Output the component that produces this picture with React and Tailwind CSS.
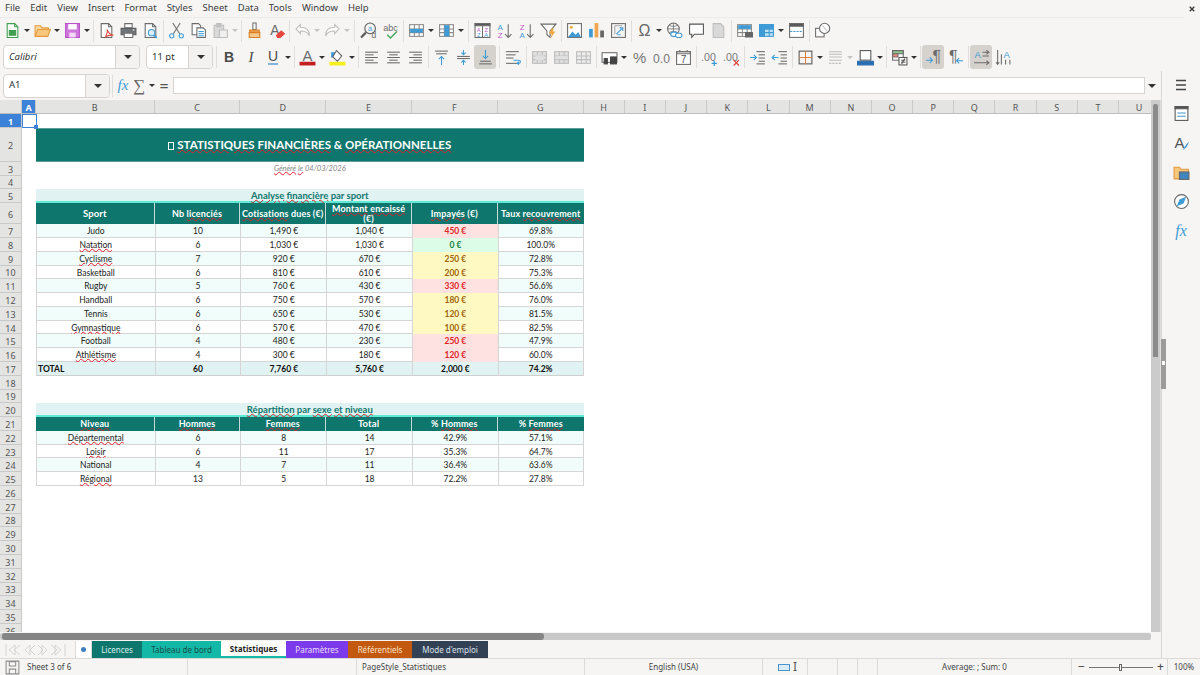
import React from "react";

const BLUE = "#3f9bd6";
const GREY = "#6b6b6b";
const LIGHT = "#bdbdbd";

const S = ({ children, stroke = GREY }) => (
    <svg viewBox="0 0 16 16" className="w-[17px] h-[17px]" fill="none" stroke={stroke} strokeWidth="1">
        {children}
    </svg>
);

const Lines = ({ rows, color = GREY }) => (
    <>
        {rows.map(([x1, x2, y], i) => (
            <path key={i} d={`M${x1} ${y}H${x2}`} stroke={color} />
        ))}
    </>
);

const Grid = ({ fill = "#fff", stroke = "#8a8a8a" }) => (
    <>
        <rect x="1.5" y="2.5" width="13" height="11" fill={fill} stroke={stroke} />
        <path d="M1.5 6.5h13M1.5 10h13M6 2.5v11M10.5 2.5v11" stroke={stroke} />
    </>
);

const T = ({ x = 8, y = 12, size = 11, fill = GREY, weight = 400, style, children }) => (
    <text x={x} y={y} fontSize={size} fill={fill} stroke="none" fontWeight={weight} fontStyle={style} textAnchor="middle" fontFamily="Liberation Sans, sans-serif">
        {children}
    </text>
);

const icons = {
    newdoc: <S stroke="#3f9e4f"><path d="M3 1.5h7l3 3v10H3z" fill="#fff" /><path d="M5 8h6v4.5H5z" fill="#3f9e4f" /><path d="M10 1.5v3h3" /></S>,
    open: <S stroke="#e49a3c"><path d="M1 13.5v-10h5l1.5 2h6v2" fill="#fbd9a3" /><path d="M1 13.5l2.5-6.5h12l-2.5 6.5z" fill="#f8c77e" /></S>,
    save: <S stroke="#b94fc9"><path d="M1.5 1.5h13v13h-13z" fill="#cf77dc" /><path d="M4 2h8v5H4z" fill="#fff" stroke="none" /><path d="M5 10h6v4.5H5z" fill="#f3d9f7" stroke="none" /></S>,
    pdf: <S><path d="M3 1.5h7l3 3v10H3z" fill="#fff" /><path d="M10 1.5v3h3" /><path d="M7 14c2-4 2-6 1.5-7 1 3 3 5 6 5.5-3-.5-6 .5-7.5 1.5z" stroke="#e0483a" /></S>,
    print: <S><path d="M4.5 1.5h7v4h-7z" fill="#fff" /><path d="M1 6h14v6H1z" fill="#6f7478" stroke="#5c6064" /><path d="M4 10.5h8v4H4z" fill="#fff" /><path d="M12 7.5h1.5" stroke="#fff" /></S>,
    preview: <S><path d="M3 1.5h7l3 3v10H3z" fill="#fff" /><path d="M10 1.5v3h3" /><circle cx="9" cy="10" r="3" stroke={BLUE} fill="#dcefff" /><path d="M11 12.5l3 2.5" stroke={BLUE} strokeWidth="1.5" /></S>,
    cut: <S><path d="M4.5 1l6.5 10M11.5 1L5 11" /><circle cx="3.5" cy="13" r="2" stroke={BLUE} /><circle cx="12.5" cy="13" r="2" stroke={BLUE} /></S>,
    copy: <S><path d="M2 1.5h6l2 2v8.5H2z" fill="#fff" /><path d="M6.5 5.5h6l2 2v7H6.5z" fill="#fff" /><Lines color={BLUE} rows={[[8, 13, 9], [8, 13, 11], [8, 13, 13]]} /></S>,
    paste: <S stroke={LIGHT}><path d="M2 3h9v11.5H2z" fill="#d9d9d9" /><path d="M4.5 1.5h4v3h-4z" fill="#c4c4c4" /><path d="M7 7.5h7.5v7H7z" fill="#efefef" /></S>,
    clone: <S stroke="#d97f22"><path d="M6.5 1h3v6h-3z" fill="#fff" stroke={GREY} /><path d="M3.5 7.5h9v2h-9z" fill="#f4b266" /><path d="M3 10h10v4.5H3z" fill="#f7c98d" /></S>,
    clear: <S><T x={6.5} y={12} size={13}>A</T><path d="M8 12.5l4.5-4 3 2.5-4 3.5H9z" fill="#e8473f" stroke="#e8473f" /></S>,
    undo: <S stroke={LIGHT}><path d="M2 6.5l4-4V5c5 0 8.5 2 8.5 8C13 9.500 10.500 8.500 6 8.500V11z" fill="#fff" /></S>,
    redo: <S stroke={LIGHT}><path d="M14 6.5l-4-4V5c-5 0-8.500 2-8.500 8C3 9.500 5.500 8.500 10 8.500V11z" fill="#fff" /></S>,
    find: <S><circle cx="9.5" cy="6" r="5" stroke="#5a5a5a" /><path d="M5.5 10L1 14.5" strokeWidth="2" stroke="#5a5a5a" /><T x={9.5} y={8.5} size={7} fill={BLUE}>a</T><T x={13} y={15.5} size={8}>d</T></S>,
    spell: <S><T x={8} y={8} size={8.5}>abc</T><path d="M5 12l3 3 6-6" stroke="#45a85a" strokeWidth="1.4" /></S>,
    row: <S><Grid /><rect x="2" y="6.5" width="12" height="3.5" fill={BLUE} stroke="none" /></S>,
    col: <S><Grid /><rect x="6" y="3" width="4.5" height="10.5" fill={BLUE} stroke="none" /></S>,
    sort: <S><path d="M1 1.5h14v13H1z" fill="#fff" /><path d="M1 1.5h14v2H1z" fill="#555" /><path d="M8 3.5v11" /><T x={4.5} y={9} size={5.5} fill="#b85ac7">A</T><T x={4.5} y={14} size={5.5} fill={BLUE}>Z</T><T x={11.5} y={9} size={5.5} fill="#b85ac7">Z</T><T x={11.5} y={14} size={5.5} fill={BLUE}>A</T></S>,
    asc: <S><T x={4} y={7.5} size={7.5} fill={BLUE}>A</T><T x={4} y={15} size={7.5} fill="#b85ac7">Z</T><path d="M11.5 2v12.5M8.5 11.5l3 3 3-3" /></S>,
    desc: <S><T x={4} y={7.5} size={7.5} fill="#b85ac7">Z</T><T x={4} y={15} size={7.5} fill={BLUE}>A</T><path d="M11.5 2v12.5M8.5 11.5l3 3 3-3" /></S>,
    filter: <S><path d="M1 2h14L9.5 8.5v6l-3-2.5V8.5z" fill="#fff" /><path d="M11 6l-2.5 5H11l-1 4 4.5-6H12l1-3z" fill="#f3a73b" stroke="none" /></S>,
    image: <S><rect x="1.5" y="1.5" width="13" height="13" fill="#fff" /><circle cx="5" cy="5" r="1.5" fill="#f3b14b" stroke="none" /><path d="M2 14l4-5 3 3 2.5-2.5L14 14z" fill={BLUE} stroke="none" /></S>,
    chart: <S stroke="none"><rect x="1" y="6.5" width="3.5" height="8" fill={BLUE} /><rect x="6.2" y="1" width="3.5" height="13.5" fill="#f0a850" /><rect x="11.5" y="8" width="3.5" height="6.5" fill="#666" /></S>,
    pivot: <S><rect x="1.5" y="1.5" width="13" height="13" fill="#f5f5f5" /><path d="M4.5 3.5h7M4.5 3.5v8" stroke="#aaa" /><path d="M6 11.5l5-5M9 5.500h3v3M10 12H7" stroke={BLUE} /></S>,
    omega: <S><T x={8} y={13.5} size={15} fill="#666">Ω</T></S>,
    link: <S><circle cx="7" cy="6.5" r="5.5" /><path d="M1.5 6.5h11M7 1v11M3 3c2.5 1.500 5.500 1.500 8 0M3 10c2.500-1.500 5.500-1.500 8 0" strokeWidth=".7" /><rect x="4.5" y="9.5" width="6" height="4" rx="2" stroke={BLUE} fill="#fff" /><rect x="9" y="10.5" width="6" height="4" rx="2" stroke={BLUE} fill="#fff" /></S>,
    comment: <S stroke="#555"><path d="M1.5 2h13v9.500H6l-2.500 3v-3h-2z" fill="#fff" /></S>,
    header: <S stroke={LIGHT}><path d="M3 1.5h7l3 3v10H3z" fill="#d8d8d8" /></S>,
    printarea: <S><Grid /><rect x="2" y="3" width="12" height="3.5" fill={BLUE} stroke="none" /><path d="M9 10h6.5v4H9z" fill="#666" stroke="#666" /></S>,
    freeze: <S stroke={BLUE}><Grid fill="#bfe0f5" stroke={BLUE} /><rect x="1.5" y="2.5" width="13" height="4" fill={BLUE} /><rect x="1.5" y="2.5" width="4.5" height="11" fill={BLUE} /></S>,
    split: <S><rect x="1.5" y="1.5" width="13" height="13" fill="#fff" /><path d="M1.5 1.5h13V4h-13z" fill="#555" /><path d="M2 9h12" stroke={BLUE} strokeDasharray="2 1" /></S>,
    shapes: <S><rect x="1.5" y="6" width="8" height="8" fill="#fff" /><circle cx="10" cy="6" r="4.8" fill="#fff" /><path d="M8 3.5l4.500 5" stroke="#c8c8c8" /></S>,
    bold: <span className="font-['Liberation_Sans',sans-serif] font-bold text-[14px] text-[#4a4a4a]">B</span>,
    italic: <span className="font-['Liberation_Serif',serif] italic text-[15px] text-[#4a4a4a]">I</span>,
    underline: <span className="font-['Liberation_Sans',sans-serif] text-[14px] text-[#4a4a4a] border-b-2 border-[#7fb5dc] leading-[14px]">U</span>,
    fontcolor: <S stroke="none"><T x={8} y={11} size={14}>A</T><rect x="0.5" y="12" width="15" height="3.5" fill="#c21f24" /></S>,
    highlight: <S stroke="none"><rect x="0.5" y="12" width="15" height="3.5" fill="#f7f01e" /><path d="M2 3h5v5H2z" fill={BLUE} /><path d="M7 1.5l5 5-4 5-4.500-4z" fill="#fff" stroke="#666" /></S>,
    left: <S><Lines rows={[[2, 14, 3], [2, 10, 5.5], [2, 14, 8], [2, 10, 10.5], [2, 14, 13]]} /></S>,
    center: <S><Lines rows={[[2, 14, 3], [4, 12, 5.5], [2, 14, 8], [4, 12, 10.5], [2, 14, 13]]} /></S>,
    right: <S><Lines rows={[[2, 14, 3], [6, 14, 5.5], [2, 14, 8], [6, 14, 10.5], [2, 14, 13]]} /></S>,
    vtop: <S><Lines rows={[[2, 14, 2], [3, 13, 4.5]]} /><path d="M8 15V7M5.500 9.500L8 7l2.500 2.500" stroke={BLUE} /></S>,
    vmid: <S><Lines rows={[[2, 14, 7], [2, 14, 9]]} /><path d="M8 1v4.500M6 3.500l2 2 2-2M8 15v-4.500M6 12.500l2-2 2 2" stroke={BLUE} /></S>,
    vbot: <S><Lines rows={[[3, 13, 11.5], [2, 14, 14]]} /><path d="M8 1v8M5.500 6.500L8 9l2.500-2.500" stroke={BLUE} /></S>,
    wrap: <S><Lines rows={[[1, 13, 2.5], [1, 10, 5.5], [1, 8, 8.5], [1, 12, 13.5]]} /><path d="M8 10.500h5c2 0 2 3 0 3h-1M13 12l-1.500 1.500 1.500 1.500" stroke={BLUE} /></S>,
    merge: <S stroke={LIGHT}><Grid fill="#e0e0e0" stroke={LIGHT} /><rect x="4" y="6" width="8" height="4.5" fill="#e0e0e0" stroke="none" /></S>,
    mergeb: <S stroke={LIGHT}><Grid fill="#e0e0e0" stroke={LIGHT} /><rect x="2" y="6.7" width="12" height="3" fill="#e0e0e0" stroke="none" /></S>,
    unmerge: <S stroke={LIGHT}><Grid fill="#ececec" stroke={LIGHT} /></S>,
    currency: <S><rect x="1" y="3.5" width="14" height="9" fill="#fff" /><rect x="3" y="9" width="3" height="5" fill="#444" stroke="#444" /><rect x="9" y="7.5" width="2.5" height="6.5" fill="#444" stroke="#444" /><rect x="12" y="7.5" width="2.5" height="6.5" fill="#444" stroke="#444" /></S>,
    percent: <S stroke="none"><T x={8} y={13.5} size={14} fill="#777">%</T></S>,
    number: <S stroke="none"><T x={8} y={13} size={11.5} fill="#777">0.0</T></S>,
    date: <S><rect x="1.5" y="2.5" width="13" height="12" fill="#fff" /><path d="M1.500 2.500h13v2h-13zM4.500 1v2M11.500 1v2" /><T x={8} y={13.5} size={9.5} fill="#555">7</T></S>,
    adddec: <S stroke="none"><T x={7} y={11} size={10} fill="#777">.00</T><path d="M10 13.500h5M12.500 11v5" stroke={BLUE} strokeWidth="1.2" /></S>,
    deldec: <S stroke="none"><T x={7} y={11} size={10} fill="#777">.00</T><path d="M10 10.500l5 5M15 10.500l-5 5" stroke="#e0483a" strokeWidth="1.2" /></S>,
    indent: <S><Lines rows={[[7, 15, 2.5], [9, 15, 5.5], [9, 15, 8.5], [9, 15, 11.5], [7, 15, 14]]} /><path d="M1 8h6M4.500 5.500L7 8l-2.500 2.500" stroke={BLUE} /></S>,
    outdent: <S><Lines rows={[[7, 15, 2.5], [9, 15, 5.5], [9, 15, 8.5], [9, 15, 11.5], [7, 15, 14]]} /><path d="M7 8H1M3.500 5.500L1 8l2.500 2.500" stroke={BLUE} /></S>,
    border: <S><rect x="2" y="2" width="12" height="12" stroke="#555" /><path d="M8 2v12M2 8h12" stroke="#d9823b" /></S>,
    linestyle: <S stroke={LIGHT}><path d="M2 2.500h12M2 5h12M2 7.500h12M2 10.500h12" /><path d="M2 13.500h12" strokeDasharray="2 1" /></S>,
    bordercolor: <S><rect x="3" y="1.5" width="10" height="9" fill="#fff" stroke="#555" /><path d="M.5 11.500h15V15H.5z" fill="#2a6eb0" stroke="#2a6eb0" /></S>,
    cond: <S><rect x="1.5" y="1.5" width="10" height="9" fill="#fff" /><path d="M1.500 1.500h10v3h-10z" fill="#8fc88f" /><path d="M1.500 4.500h5v3h-5z" fill="#e88a7a" /><rect x="7.5" y="8" width="7.5" height="7" fill="#fff" stroke="#555" /><path d="M9.500 10.500h4M9.500 12.500h4M10 14l3-5" stroke="#555" /></S>,
    ltr: <S><T x={11} y={12} size={15}>¶</T><path d="M1 10.500h6M4.500 8L7 10.500 4.500 13" stroke={BLUE} /></S>,
    rtl: <S><T x={6} y={12} size={15}>¶</T><path d="M15 11H9M11.500 8.500L9 11l2.500 2.500" stroke={BLUE} /></S>,
    lr: <S><T x={4.5} y={8} size={9} fill={BLUE}>A</T><path d="M9 3h6M9 6.500h6M1 13h14M12.500 1L15 3l-2.500 2M12.500 11l2.500 2-2.500 2" /></S>,
    tb: <S><T x={11} y={8} size={9} fill={BLUE}>A</T><path d="M2.500 1v13.500M6 5v9.500M10 10v4.500M14 10v4.500M1 12.500l1.500 2 1.500-2" /></S>,
};

const toolbar1 = ["newdoc", "v", "open", "v", "save", "v", "|", "pdf", "print", "preview", "|", "cut", "copy", "paste", "g", "|", "clone", "clear", "|", "undo", "g", "redo", "g", "||", "find", "spell", "|", "row", "v", "col", "v", "||", "sort", "asc", "desc", "filter", "|", "image", "chart", "pivot", "|", "omega", "v", "link", "comment", "header", "|", "printarea", "freeze", "v", "split", "|", "shapes"];
const toolbar2 = ["bold", "italic", "underline", "v", "|", "fontcolor", "v", "highlight", "v", "|", "left", "center", "right", "|", "vtop", "vmid", "vbot", "||", "wrap", "|", "merge", "mergeb", "unmerge", "|", "currency", "v", "percent", "number", "date", "|", "adddec", "deldec", "|", "indent", "outdent", "|", "border", "v", "linestyle", "g", "bordercolor", "v", "|", "cond", "v", "|", "ltr", "rtl", "|", "lr", "tb"];
const activeTools = ["vbot", "ltr", "lr"];

const Arrow = ({ grey }) => (
    <span className="w-[8px] flex justify-center">
        <span className={`border-x-[3px] border-x-transparent border-t-[3.5px] ${grey ? "border-t-[#c4c4c4]" : "border-t-[#333]"}`} />
    </span>
);

const Sep = ({ wide }) => (
    <span className={`${wide ? "w-[6px]" : "w-[4px]"} h-[22px] flex justify-center`}>
        <span className="w-px h-full bg-[#e0dedc]" />
    </span>
);

const Tools = ({ items }) =>
    items.map((t, i) => {
        if (t === "v") return <Arrow key={i} />;
        if (t === "g") return <Arrow key={i} grey />;
        if (t === "|") return <Sep key={i} />;
        if (t === "||") return <Sep key={i} wide />;
        return (
            <span key={i} className={`w-[22px] h-[24px] flex items-center justify-center rounded-[3px] ${activeTools.includes(t) ? "bg-[#d5d2ce]" : ""}`}>
                {icons[t]}
            </span>
        );
    });

const Combo = ({ w, btn = "w-[24px]", italic, children }) => (
    <div className={`${w} h-[24px] flex bg-white border border-[#d6d3d0] rounded-[4px] overflow-hidden shrink-0`}>
        <span className={`flex-1 pl-[5px] flex items-center text-[9.5px] text-[#333] ${italic ? "italic" : ""}`}>{children}</span>
        <span className={`${btn} bg-[#f3f2f0] border-l border-[#d6d3d0] flex items-center justify-center`}>
            <span className="border-x-[4px] border-x-transparent border-t-[4.5px] border-t-[#333]" />
        </span>
    </div>
);

const menu = ["File", "Edit", "View", "Insert", "Format", "Styles", "Sheet", "Data", "Tools", "Window", "Help"];

const colHeads = ["A", "B", "C", "D", "E", "F", "G", "H", "I", "J", "K", "L", "M", "N", "O", "P", "Q", "R", "S", "T", "U"];

// row number -> height in px
const rowH = { 1: 13.5, 2: 34.5, 3: 13.6, 4: 13.6, 5: 14, 6: 21 };
const heightOf = (n) => rowH[n] || 13.79;

const Wavy = ({ children }) => <span className="underline decoration-wavy decoration-[#e0202a] decoration-[0.7px] underline-offset-0">{children}</span>;

const sports = [
    ["Judo", "10", "1,490 €", "1,040 €", "450 €", "r", "69.8%"],
    [<Wavy>Natation</Wavy>, "6", "1,030 €", "1,030 €", "0 €", "g", "100.0%"],
    [<Wavy>Cyclisme</Wavy>, "7", "920 €", "670 €", "250 €", "y", "72.8%"],
    ["Basketball", "6", "810 €", "610 €", "200 €", "y", "75.3%"],
    ["Rugby", "5", "760 €", "430 €", "330 €", "r", "56.6%"],
    ["Handball", "6", "750 €", "570 €", "180 €", "y", "76.0%"],
    ["Tennis", "6", "650 €", "530 €", "120 €", "y", "81.5%"],
    [<Wavy>Gymnastique</Wavy>, "6", "570 €", "470 €", "100 €", "y", "82.5%"],
    ["Football", "4", "480 €", "230 €", "250 €", "r", "47.9%"],
    [<Wavy>Athlétisme</Wavy>, "4", "300 €", "180 €", "120 €", "r", "60.0%"],
];

const levels = [
    [<Wavy>Départemental</Wavy>, "6", "8", "14", "42.9%", "57.1%"],
    [<Wavy>Loisir</Wavy>, "6", "11", "17", "35.3%", "64.7%"],
    ["National", "4", "7", "11", "36.4%", "63.6%"],
    [<Wavy>Régional</Wavy>, "13", "5", "18", "72.2%", "27.8%"],
];

const unpaidStyle = {
    r: "bg-[#fee2e2] text-[#dc2626] font-bold",
    g: "bg-[#dcfce7] text-[#15803d] font-bold",
    y: "bg-[#fef9c3] text-[#a16207] font-bold",
};

const cellCols = "ml-[14px] w-[547.6px] h-full grid grid-cols-[118.6px_repeat(5,85.8px)]";

const TitleRow = () => (
    <div className="ml-[14px] w-[547.6px] h-full bg-[#0f766e] border-y border-[#5c9f99] flex items-center justify-center text-white font-bold text-[11.5px]">
        <span>
            <span className="inline-block w-[6px] h-[8px] border border-white mr-[3px] align-[-1px]" />
            <Wavy>STATISTIQUES</Wavy> <Wavy>FINANCIÈRES</Wavy> &amp; <Wavy>OPÉRATIONNELLES</Wavy>
        </span>
    </div>
);

const SectionRow = ({ children }) => (
    <div className="ml-[14px] w-[547.6px] h-full bg-[#e0f2f1] border-b-2 border-[#5eead4] flex items-center justify-center pt-[1px] text-[#0f766e] font-bold text-[9.5px]">
        <span>{children}</span>
    </div>
);

const HeadRow = ({ cells }) => (
    <div className={cellCols}>
        {cells.map((c, i) => (
            <div key={i} className="bg-[#0f766e] border-r border-[#c7d8d6] last:border-r-0 flex items-center justify-center text-center text-white font-bold text-[9px] leading-[10px] tracking-[.15px]">
                {c}
            </div>
        ))}
    </div>
);

const BodyRow = ({ cells, odd, special }) => (
    <div className={`${cellCols} text-[8.5px] text-[#222] border-b border-[#d5d5d5] ${odd ? "bg-[#f0fdfa]" : "bg-white"}`}>
        {cells.map((c, i) => (
            <div key={i} className={`border-l border-[#d5d5d5] last:border-r flex items-center justify-center pt-[1px] ${special && i === 4 ? unpaidStyle[special] : ""}`}>
                <span>{c}</span>
            </div>
        ))}
    </div>
);

const TotalRow = () => (
    <div className={`${cellCols} text-[8.5px] font-bold text-[#111] bg-[#e0f2f1] border-b border-[#cfcfcf]`}>
        {["TOTAL", "60", "7,760 €", "5,760 €", "2,000 €", "74.2%"].map((c, i) => (
            <div key={i} className={`border-l border-[#d5d5d5] last:border-r flex items-center pt-[1px] ${i === 0 ? "pl-[1px]" : "justify-center"}`}>
                {c}
            </div>
        ))}
    </div>
);

const rowContent = (n) => {
    if (n === 2) return <TitleRow />;
    if (n === 3)
        return (
            <div className="ml-[14px] w-[547.6px] h-full flex items-center justify-center italic text-[7.5px] text-[#888]">
                <span><Wavy>Généré</Wavy> <Wavy>le</Wavy> 04/03/2026</span>
            </div>
        );
    if (n === 5) return <SectionRow><Wavy>Analyse</Wavy> <Wavy>financière</Wavy> par sport</SectionRow>;
    if (n === 6)
        return (
            <HeadRow
                cells={[
                    <span className="text-[9.5px]">Sport</span>,
                    <span>Nb <Wavy>licenciés</Wavy></span>,
                    <span className="whitespace-nowrap"><Wavy>Cotisations</Wavy> dues (€)</span>,
                    <span><Wavy>Montant</Wavy> <Wavy>encaissé</Wavy> (€)</span>,
                    <span><Wavy>Impayés</Wavy> (€)</span>,
                    <span className="whitespace-nowrap">Taux <Wavy>recouvrement</Wavy></span>,
                ]}
            />
        );
    if (n >= 7 && n <= 16) {
        const [a, b, c, d, e, s, f] = sports[n - 7];
        return <BodyRow cells={[a, b, c, d, e, f]} odd={n % 2 === 1} special={s} />;
    }
    if (n === 17) return <TotalRow />;
    if (n === 20) return <SectionRow><Wavy>Répartition</Wavy> par <Wavy>sexe</Wavy> <Wavy>et</Wavy> <Wavy>niveau</Wavy></SectionRow>;
    if (n === 21)
        return (
            <HeadRow
                cells={[
                    <Wavy>Niveau</Wavy>,
                    <Wavy>Hommes</Wavy>,
                    <Wavy>Femmes</Wavy>,
                    <span className="text-[9.5px]">Total</span>,
                    <span>% <Wavy>Hommes</Wavy></span>,
                    <span>% <Wavy>Femmes</Wavy></span>,
                ]}
            />
        );
    if (n >= 22 && n <= 25) return <BodyRow cells={levels[n - 22]} odd={n % 2 === 0} />;
    return null;
};

const rowNumbers = Array.from({ length: 36 }, (_, i) => i + 1);

const Sheet = () => (
    <div className="w-[1151px] h-full overflow-hidden bg-white relative font-['Lato',sans-serif]">
        <div className="h-[14px] flex bg-[#e4e4e3] border-b border-[#bdbdbd]">
            <div className="w-[22px] shrink-0 border-r border-[#c9c9c9]" />
            <div className="flex-1 grid grid-cols-[14px_118.6px_repeat(5,85.8px)_repeat(14,41.2px)] text-[9px] text-[#555] font-['Noto_Sans',sans-serif]">
                {colHeads.map((c, i) => (
                    <div key={c} className={`flex items-center justify-center pt-[1px] leading-none border-r border-[#c9c9c9] ${i === 0 ? "bg-[#3b82d8] text-white font-bold" : ""}`}>
                        {c}
                    </div>
                ))}
            </div>
        </div>
        {rowNumbers.map((n) => (
            <div key={n} className="flex shrink-0" style={{ height: heightOf(n) }}>
                <div className={`w-[22px] shrink-0 flex items-center justify-center pt-[2px] text-[9px] leading-none font-['Noto_Sans',sans-serif] border-r border-b border-[#c9c9c9] ${n === 1 ? "bg-[#3b82d8] text-white font-bold" : "bg-[#e4e4e3] text-[#555]"}`}>
                    {n}
                </div>
                <div className="flex-1 min-w-0">{rowContent(n)}</div>
            </div>
        ))}
        {/* A1 cell cursor */}
        <div className="absolute left-[22px] top-[14px] w-[14.5px] h-[14px] border border-[#3b82d8]">
            <span className="absolute -right-[2px] -bottom-[2px] w-[4px] h-[4px] bg-[#3b82d8]" />
        </div>
    </div>
);

const tabs = [
    { name: "Licences", cls: "w-[50px] bg-[#0f766e] text-[#d8f0ec]" },
    { name: "Tableau de bord", cls: "w-[79px] bg-[#14b8a6] text-[#134e4a]" },
    { name: "Statistiques", cls: "w-[65px] bg-white text-[#222] font-bold border-b-2 border-[#14b8a6]" },
    { name: "Paramètres", cls: "w-[62px] bg-[#7c3aed] text-[#eadcff]" },
    { name: "Référentiels", cls: "w-[64px] bg-[#c2590e] text-[#fde2c8]" },
    { name: "Mode d'emploi", cls: "w-[76px] bg-[#334155] text-[#dbe2ea]" },
];

const TabNav = () => (
    <svg viewBox="0 0 62 14" className="w-[62px] h-[14px]" fill="none" stroke="#d6d4d1">
        <path d="M1 1v12M10 2L4 7l6 5zM15 2L9 7l6 5M25 2l-5 5 5 5zM30 2l-5 5 5 5M33 2l5 5-5 5M37 2l5 5-5 5zM46 2l6 5-6 5M50 2l6 5-6 5zM60 1v12" />
    </svg>
);

const Side = () => (
    <div className="w-[39px] shrink-0 border-l border-[#d8d6d3] flex flex-col items-center pt-[6px] gap-[12.3px] relative">
        <svg viewBox="0 0 16 16" className="w-[16px] h-[16px]" stroke="#444" strokeWidth="1.5"><path d="M3 3.5h10M3 8h10M3 12.5h10" /></svg>
        <S stroke="#555"><rect x="2" y="1.5" width="12" height="13" fill="#fff" /><path d="M2 1.500h12v2H2z" fill="#555" /><path d="M4 7.500h8M4 10.500h8" stroke={BLUE} /></S>
        <S stroke="none"><T x={6} y={12} size={14} fill="#555">A</T><path d="M9 14c2-3 4-6 6-8-1 4-3 7-6 8z" fill={BLUE} /></S>
        <S stroke="#e49a3c"><path d="M1 14V3h5l1.500 2h7v9z" fill="#f8c77e" /><rect x="6" y="7.5" width="9" height="7" fill="#3e86bd" stroke="#666" /></S>
        <S stroke="#666"><circle cx="8" cy="8" r="6.5" fill="#fff" /><path d="M4.500 11.500l2-5 5-2-2 5z" fill={BLUE} stroke={BLUE} /></S>
        <span className="font-['Liberation_Serif',serif] italic text-[16px] leading-[17px] text-[#3f9bd6]">fx</span>
        {/* deck collapse handle */}
        <div className="absolute -left-[1px] top-[268px] w-[5px] h-[50px] bg-[#9b9b9b]">
            <span className="absolute left-[1px] top-[22px] w-[3px] h-[4px] bg-white" />
        </div>
    </div>
);

const StatusCell = ({ w, children, cls = "justify-center" }) => (
    <div className={`${w} h-full flex items-center border-r border-[#dcdad7] shrink-0 ${cls}`}>{children}</div>
);

export default function App() {
    return (
        <div className="w-[1200px] h-[675px] overflow-hidden flex flex-col bg-[#f6f5f4] text-[#3c3c3c] font-['Noto_Sans',sans-serif]">
            {/* menu bar */}
            <div className="h-[18px] shrink-0 flex">
                <div className="flex-1 flex items-center pl-[5px] gap-[10px] text-[9.5px] border-b border-[#ecebe9]">
                    {menu.map((m) => (
                        <span key={m}>{m}</span>
                    ))}
                </div>
                <span className="w-[16px] flex items-center justify-center">
                    <svg viewBox="0 0 8 8" className="w-[6px] h-[6px]" stroke="#333" strokeWidth="1.6"><path d="M1 1l6 6M7 1L1 7" /></svg>
                </span>
            </div>

            {/* standard toolbar */}
            <div className="h-[25px] shrink-0 flex items-center pl-[1px]">
                <Tools items={toolbar1} />
            </div>

            {/* formatting toolbar */}
            <div className="h-[28px] shrink-0 flex items-center pl-[3px]">
                <Combo w="w-[137px]" italic>Calibri</Combo>
                <span className="w-[6px]" />
                <Combo w="w-[67px]">11 pt</Combo>
                <span className="w-[1px]" />
                <Sep />
                <Tools items={toolbar2} />
            </div>

            <div className="flex-1 min-h-0 flex">
                <div className="w-[1161px] shrink-0 flex flex-col">
                    {/* formula bar */}
                    <div className="h-[29px] shrink-0 flex items-center pl-[3px]">
                        <Combo w="w-[107px]">A1</Combo>
                        <Sep />
                        <span className="w-[18px] text-center font-['Liberation_Serif',serif] italic text-[15px] text-[#3f9bd6]">fx</span>
                        <span className="w-[14px] text-center font-['Liberation_Serif',serif] text-[17px] text-[#666]">∑</span>
                        <span className="w-[2px]" />
                        <Arrow />
                        <span className="w-[16px] text-center text-[16px] text-[#555] leading-none">=</span>
                        <div className="ml-[1px] w-[972px] h-[17px] bg-white border border-[#d6d3d0]" />
                        <span className="w-[14px] flex justify-center">
                            <span className="border-x-[4px] border-x-transparent border-t-[4.5px] border-t-[#333]" />
                        </span>
                    </div>

                    {/* sheet plus vertical scrollbar */}
                    <div className="h-[532px] shrink-0 flex">
                        <Sheet />
                        <div className="w-[10px] bg-[#cbcbcb] pt-[4px] px-[2px] border-r border-[#e0dedc]">
                            <div className="h-[253px] bg-[#8b8b8b] rounded-t-[2px]" />
                        </div>
                    </div>

                    {/* horizontal scrollbar */}
                    <div className="h-[9px] shrink-0 pt-[1px] pb-[1px] pr-[10px]">
                        <div className="h-[7px] bg-[#c8c8c8] rounded-[2px]">
                            <div className="w-[542px] ml-[2px] h-full bg-[#858585] rounded-[3px]" />
                        </div>
                    </div>

                    {/* sheet tabs */}
                    <div className="h-[17px] shrink-0 flex items-stretch text-[8px]">
                        <div className="w-[68px] pl-[5px] flex items-center">
                            <TabNav />
                        </div>
                        <div className="w-[7px]" />
                        <div className="w-[17px] bg-white border-x border-[#dddbd8] flex items-center justify-center">
                            <span className="w-[5px] h-[5px] rounded-full bg-[#3f7fbf]" />
                        </div>
                        {tabs.map((t) => (
                            <div key={t.name} className={`${t.cls} flex items-center justify-center whitespace-nowrap`}>
                                {t.name}
                            </div>
                        ))}
                    </div>
                </div>
                <Side />
            </div>

            {/* status bar */}
            <div className="h-[17px] shrink-0 flex items-center border-t border-[#dcdad7] text-[8px] text-[#444]">
                <StatusCell w="w-[188px]" cls="pl-[4px] gap-[6px]">
                    <S stroke="#8d8d8d"><path d="M2 2h12v12H2zM5 2.500h6v4H5zM5 9.500h6V14H5z" /></S>
                    <span>Sheet 3 of 6</span>
                </StatusCell>
                <StatusCell w="w-[169px]"> </StatusCell>
                <StatusCell w="w-[228px]" cls="pl-[5px]">PageStyle_Statistiques</StatusCell>
                <StatusCell w="w-[178px]">English (USA)</StatusCell>
                <StatusCell w="w-[45px]" cls="pl-[15px] gap-[3px]">
                    <span className="w-[12px] h-[7px] border border-[#4b96c9] bg-[#dcecf7]" />
                    <span className="text-[12px] leading-none text-[#555]">I</span>
                </StatusCell>
                <StatusCell w="w-[30px]"> </StatusCell>
                <StatusCell w="w-[20px]"> </StatusCell>
                <StatusCell w="w-[20px]"> </StatusCell>
                <StatusCell w="w-[194px]">Average: ; Sum: 0</StatusCell>
                <StatusCell w="w-[96px]" cls="pl-[6px] gap-[4px]">
                    <span className="text-[12px] leading-none">−</span>
                    <span className="w-[64px] h-px bg-[#777] flex justify-center items-center">
                        <span className="w-[3px] h-[7px] border border-[#666] bg-[#f6f5f4]" />
                    </span>
                    <span className="text-[12px] leading-none">+</span>
                </StatusCell>
                <div className="flex-1 text-center">100%</div>
            </div>
        </div>
    );
}
